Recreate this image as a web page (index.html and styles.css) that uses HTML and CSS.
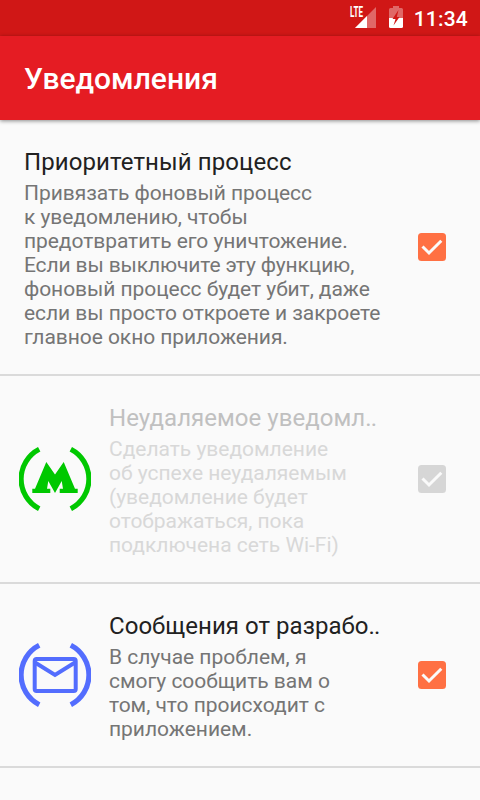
FILE: index.html
```html
<!DOCTYPE html>
<html lang="ru">
<head>
<meta charset="utf-8">
<title>Уведомления</title>
<link rel="stylesheet" href="styles.css">
</head>
<body>
<div class="status">
  <svg class="signal" width="27" height="22" viewBox="0 0 27 22"><path d="M26 1V22H5z" fill="#fff" fill-opacity=".35"/><path d="M17 10V22H5z" fill="#fff"/><path d="M0 0H14V12H0z" fill="#d01716"/><text class="lte" x="0" y="11" textLength="13" lengthAdjust="spacingAndGlyphs">LTE</text></svg>
  <svg class="battery" width="14" height="22" viewBox="0 0 14 22"><path d="M4 0H10V2H12.500Q14 2 14 3.500V12H0V3.500Q0 2 1.500 2H4z" fill="#fff" fill-opacity=".35"/><path d="M0 12H14V20.500Q14 22 12.500 22H1.500Q0 22 0 20.500z" fill="#fff"/><path d="M9.500 4L3.500 13H6.500L4.500 19.500L10.500 11H7.800z" fill="#d01716"/></svg>
  <span class="clock">11:34</span>
</div>
<header class="bar"><h1>Уведомления</h1></header>
<main>
  <section class="row">
    <div class="text">
      <h2>Приоритетный процесс</h2>
      <p>Привязать фоновый процесс<br>к уведомлению, чтобы<br>предотвратить его уничтожение.<br><span class="tight">Если вы выключите эту функцию,</span><br>фоновый процесс будет убит, даже<br>если вы просто откроете и закроете<br>главное окно приложения.</p>
    </div>
    <svg class="check" viewBox="0 0 28 28"><rect width="28" height="28" rx="3.500"/><path d="M4.500 13.500L11 20L23.300 7.700"/></svg>
  </section>
  <section class="row disabled">
    <svg class="icon green" viewBox="0 0 72 64"><path class="arc" d="M20.200 2.300A33.400 33.400 0 0 0 20.200 61.700M51.800 2.300A33.400 33.400 0 0 1 51.800 61.700"/><path class="fill" d="M27.300 15L36 27.500L44.700 15L56 41.800H58.700V46H40.700V41.800H44L42.700 34L36 46L29.300 34L28 41.800H31.300V46H13.300V41.800H16z"/></svg>
    <div class="text">
      <h2>Неудаляемое уведомл<span class="dots">..</span></h2>
      <p>Сделать уведомление<br>об успехе неудаляемым<br>(уведомление будет<br>отображаться, пока<br>подключена сеть Wi-Fi)</p>
    </div>
    <svg class="check" viewBox="0 0 28 28"><rect width="28" height="28" rx="3.500"/><path d="M4.500 13.500L11 20L23.300 7.700"/></svg>
  </section>
  <section class="row">
    <svg class="icon blue" viewBox="0 0 72 64"><path class="arc" d="M20.200 2.300A33.400 33.400 0 0 0 20.200 61.700M51.800 2.300A33.400 33.400 0 0 1 51.800 61.700"/><rect class="line" x="15.700" y="16" width="41" height="32" rx="2"/><path class="line" d="M16 19.500L36 32L56 19.500"/></svg>
    <div class="text">
      <h2>Сообщения от разрабо<span class="dots">..</span></h2>
      <p>В случае проблем, я<br>смогу сообщить вам о<br>том, что происходит с<br>приложением.</p>
    </div>
    <svg class="check" viewBox="0 0 28 28"><rect width="28" height="28" rx="3.500"/><path d="M4.500 13.500L11 20L23.300 7.700"/></svg>
  </section>
</main>
</body>
</html>
```
FILE: styles.css
```css
* { box-sizing: border-box; }
body { margin: 0; width: 480px; height: 800px; overflow: hidden; background: #fafafa; font-family: Roboto, "Liberation Sans", sans-serif; }
.status { height: 36px; background: #d01716; display: flex; justify-content: flex-end; padding: 6px 12px 0 0; color: #fff; }
.signal { overflow: visible; }
.battery { margin: 0 11px 0 12px; }
.lte { font-size: 14px; font-weight: 700; fill: #fff; }
.clock { font-size: 21px; font-weight: 500; line-height: 27px; letter-spacing: .2px; }
.bar { height: 84px; background: #e51c23; display: flex; align-items: center; padding: 0 24px; box-shadow: 0 1px 4px rgba(0,0,0,.45); }
h1 { margin: 0; color: #fff; font-size: 30px; font-weight: 500; }
.row { display: flex; align-items: center; border-bottom: 2px solid #dadada; padding-right: 34px; }
.text { flex: 1; padding: 28px 0 25px 24px; white-space: nowrap; }
.icon + .text { padding-left: 18px; }
.icon + .text h2 { letter-spacing: .04px; }
.icon + .text p { letter-spacing: -.02px; }
h2 { margin: 0; color: #212121; font-size: 24px; font-weight: 400; line-height: 28px; letter-spacing: .1px; }
p { margin: 5px 0 0; color: #757575; font-size: 21px; line-height: 24px; letter-spacing: -.06px; }
.tight { letter-spacing: -.13px; }
.icon + .text .dots { letter-spacing: -1px; }
.check { width: 28px; height: 28px; fill: #ff7043; }
.check path { fill: none; stroke: #fafafa; stroke-width: 3; }
.icon { width: 72px; height: 64px; margin-left: 19px; }
.arc { fill: none; stroke: currentColor; stroke-width: 5.2; }
.line { fill: none; stroke: currentColor; stroke-width: 4; }
.fill { fill: currentColor; }
.green { color: #00c800; }
.blue { color: #536dfe; }
.disabled h2 { color: #c0c0c0; }
.disabled p { color: #d8d8d8; }
.disabled .check { fill: #d6d6d6; }
```
